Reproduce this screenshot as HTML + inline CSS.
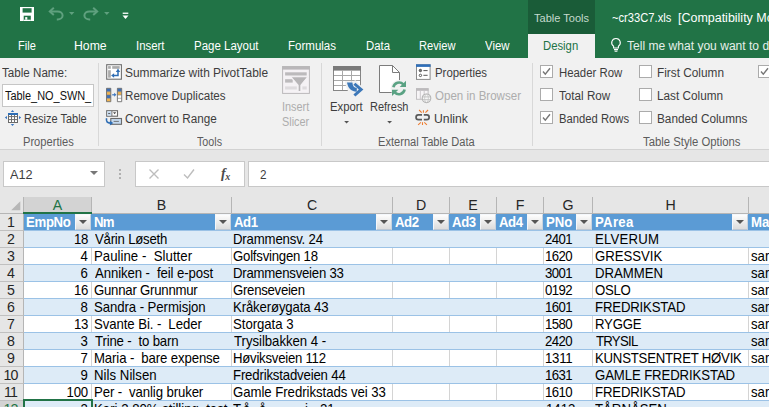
<!DOCTYPE html>
<html>
<head>
<meta charset="utf-8">
<title>Excel</title>
<style>
html,body{margin:0;padding:0;}
body{width:769px;height:407px;overflow:hidden;position:relative;background:#e6e6e6;font-family:"Liberation Sans",sans-serif;}
.abs{position:absolute;}
.t{position:absolute;white-space:nowrap;line-height:14px;height:14px;transform-origin:0 50%;}
#title{left:0;top:0;width:769px;height:58px;background:#217346;}
#ttools{left:528px;top:0;width:67px;height:34px;background:#1a5c38;}
#design{left:528px;top:34px;width:67px;height:24px;background:#f1f1f1;}
.tab{color:#fff;font-size:12px;}
#ribbon{left:0;top:58px;width:769px;height:91px;background:#f1f1f1;}
#ribline{left:0;top:149px;width:769px;height:1px;background:#d2d2d2;}
.rt{color:#3d3d3d;font-size:12px;}
.gl{color:#5c5c5c;font-size:12px;}
.dis{color:#adadad;font-size:12px;}
.sep{position:absolute;top:63px;width:1px;height:83px;background:#d8d8d8;}
.cb{position:absolute;width:11px;height:11px;border:1px solid #ababab;background:#fff;}
.box{position:absolute;background:#fff;border:1px solid #c8c8c8;box-sizing:border-box;}
#grid{left:0;top:197px;width:769px;height:210px;background:#fff;}
.ch{position:absolute;top:197px;height:17px;background:#e6e6e6;border-right:1px solid #b5b5b5;border-bottom:1px solid #b5b5b5;box-sizing:border-box;font-size:14.2px;color:#262626;text-align:center;line-height:17px;}
.rh{position:absolute;left:0;width:24px;height:17px;background:#e6e6e6;border-right:1px solid #b5b5b5;border-bottom:1px solid #c0c0c0;box-sizing:border-box;font-size:14.2px;letter-spacing:-0.8px;color:#262626;text-align:center;line-height:17px;padding-right:2px;}
.row{position:absolute;left:24px;width:745px;height:17px;box-sizing:border-box;border-bottom:1px solid #9bc2e6;}
.band{background:#ddebf7;}
.hdr{background:#5b9bd5;}
.c{position:absolute;font-size:14.2px;color:#000;white-space:nowrap;line-height:17px;height:17px;top:0;transform:scaleX(0.93);transform-origin:0 50%;}
.cr{transform-origin:100% 50%;}
.hc{position:absolute;font-size:14.2px;color:#fff;font-weight:bold;white-space:nowrap;line-height:17px;height:17px;top:0;transform:scaleX(0.93);transform-origin:0 50%;}
.vl{position:absolute;top:0;width:1px;height:16px;background:#d4d4d4;}
.dd{position:absolute;top:0px;width:16px;height:16px;background:linear-gradient(#fdfdfd,#dcdcdc);border:1px solid;border-color:#f4f7fb #c9d3de #bcc6d2 #f4f7fb;box-sizing:border-box;}
.dd:after{content:"";position:absolute;left:3px;top:5px;border-left:4px solid transparent;border-right:4px solid transparent;border-top:4.5px solid #555;}
</style>
</head>
<body>
<div class="abs" id="title"></div>
<div class="abs" id="ttools"></div>
<div class="abs" id="design"></div>
<div class="abs" id="ribbon"></div>
<div class="abs" id="ribline"></div>
<div class="sep" style="left:98.0px"></div>
<div class="sep" style="left:321.0px"></div>
<div class="sep" style="left:532.0px"></div>
<div class="box" style="left:2px;top:84px;width:92px;height:23px;border-color:#c6c6c6;"></div>
<div class="cb" style="left:540px;top:65px"></div>
<svg class="abs" style="left:540px;top:65px" width="13" height="13" viewBox="0 0 13 13"><path d="M3 6.5 L5.3 9.2 L10 3.2" fill="none" stroke="#777" stroke-width="1.4"/></svg>
<div class="cb" style="left:540px;top:88px"></div>
<div class="cb" style="left:540px;top:111px"></div>
<svg class="abs" style="left:540px;top:111px" width="13" height="13" viewBox="0 0 13 13"><path d="M3 6.5 L5.3 9.2 L10 3.2" fill="none" stroke="#777" stroke-width="1.4"/></svg>
<div class="cb" style="left:639px;top:65px"></div>
<div class="cb" style="left:639px;top:88px"></div>
<div class="cb" style="left:639px;top:111px"></div>
<div class="cb" style="left:758px;top:65px"></div>
<svg class="abs" style="left:758px;top:65px" width="13" height="13" viewBox="0 0 13 13"><path d="M3 6.5 L5.3 9.2 L10 3.2" fill="none" stroke="#777" stroke-width="1.4"/></svg>
<div class="box" style="left:3px;top:161px;width:102px;height:26px"></div>
<div class="box" style="left:135px;top:161px;width:110px;height:26px"></div>
<div class="box" style="left:248px;top:161px;width:530px;height:26px"></div>
<div class="abs" style="left:90px;top:171px;border-left:4px solid transparent;border-right:4px solid transparent;border-top:4px solid #777"></div>
<div class="abs" style="left:119px;top:169px;width:1.5px;height:2px;background:#b0b0b0"></div>
<div class="abs" style="left:119px;top:173px;width:1.5px;height:2px;background:#b0b0b0"></div>
<div class="abs" style="left:119px;top:177px;width:1.5px;height:2px;background:#b0b0b0"></div>
<svg class="abs" style="left:147px;top:167px" width="14" height="14" viewBox="0 0 14 14"><path d="M2.5 2.5 L11.5 11.5 M11.5 2.5 L2.5 11.5" stroke="#bdbdbd" stroke-width="1.4" fill="none"/></svg>
<svg class="abs" style="left:182px;top:167px" width="14" height="14" viewBox="0 0 14 14"><path d="M2 7.5 L5.5 11 L12 2.5" stroke="#bdbdbd" stroke-width="1.4" fill="none"/></svg>
<span class="abs" style="left:221px;top:166px;font-family:'Liberation Serif',serif;font-style:italic;font-weight:bold;font-size:14px;color:#4a4a4a;line-height:16px;letter-spacing:0px">f<span style="font-size:10px;position:relative;top:1.5px;left:-0.5px">x</span></span>
<div class="abs" id="grid"></div>
<div class="ch" style="left:0;width:24px"></div>
<svg class="abs" style="left:10px;top:200px" width="12" height="12" viewBox="0 0 12 12"><path d="M10.3 1.2 L10.3 10.3 L1.2 10.3 Z" fill="#b7b7b7"/></svg>
<div class="ch" style="left:24px;width:68px;background:#d3d3d3;color:#217346;border-bottom:2px solid #217346;">A</div>
<div class="ch" style="left:92px;width:140px;">B</div>
<div class="ch" style="left:232px;width:161px;">C</div>
<div class="ch" style="left:393px;width:57px;">D</div>
<div class="ch" style="left:450px;width:47px;">E</div>
<div class="ch" style="left:497px;width:47px;">F</div>
<div class="ch" style="left:544px;width:49px;">G</div>
<div class="ch" style="left:593px;width:156px;">H</div>
<div class="ch" style="left:749px;width:51px;">I</div>
<div class="rh" style="top:214px">1</div>
<div class="row hdr" style="top:214px;">
<span class="hc" style="left:1.6px;top:0px;letter-spacing:-0.35px">EmpNo</span>
<div class="dd" style="left:51px;top:0;height:16px"></div>
<span class="hc" style="left:69.6px;top:0px;letter-spacing:-0.80px">Nm</span>
<div class="dd" style="left:191px;top:0;height:16px"></div>
<span class="hc" style="left:209.6px;top:0px;letter-spacing:-0.50px">Ad1</span>
<div class="dd" style="left:352px;top:0;height:16px"></div>
<span class="hc" style="left:370.6px;top:0px;letter-spacing:-0.50px">Ad2</span>
<div class="dd" style="left:409px;top:0;height:16px"></div>
<span class="hc" style="left:427.6px;top:0px;letter-spacing:-0.40px">Ad3</span>
<div class="dd" style="left:456px;top:0;height:16px"></div>
<span class="hc" style="left:474.6px;top:0px;letter-spacing:-0.50px">Ad4</span>
<div class="dd" style="left:503px;top:0;height:16px"></div>
<span class="hc" style="left:521.6px;top:0px;letter-spacing:-0.10px">PNo</span>
<div class="dd" style="left:552px;top:0;height:16px"></div>
<span class="hc" style="left:570.6px;top:0px;letter-spacing:0.30px">PArea</span>
<div class="dd" style="left:708px;top:0;height:16px"></div>
<span class="hc" style="left:726.6px;top:0px;letter-spacing:0.00px">Ma</span>
</div>
<div class="rh" style="top:231px;">2</div>
<div class="row band" style="top:231px">
<span class="c cr" style="right:681px;letter-spacing:-0.3px">18</span>
<span class="c" style="left:70.80px;letter-spacing:-0.236px;white-space:pre">Vårin Løseth</span>
<span class="c" style="left:209.10px;letter-spacing:-0.183px;white-space:pre">Drammensv. 24</span>
<span class="c" style="left:521.20px;letter-spacing:-0.599px;white-space:pre">2401</span>
<span class="c" style="left:570.90px;letter-spacing:0.232px;white-space:pre">ELVERUM</span>
</div>
<div class="rh" style="top:248px;">3</div>
<div class="row" style="top:248px">
<div class="vl" style="left:67px"></div>
<div class="vl" style="left:207px"></div>
<div class="vl" style="left:368px"></div>
<div class="vl" style="left:425px"></div>
<div class="vl" style="left:472px"></div>
<div class="vl" style="left:519px"></div>
<div class="vl" style="left:568px"></div>
<div class="vl" style="left:724px"></div>
<span class="c cr" style="right:681px;letter-spacing:-0.3px">4</span>
<span class="c" style="left:69.80px;letter-spacing:0.033px;white-space:pre">Pauline -  Slutter</span>
<span class="c" style="left:209.10px;letter-spacing:-0.247px;white-space:pre">Golfsvingen 18</span>
<span class="c" style="left:521.20px;letter-spacing:-0.599px;white-space:pre">1620</span>
<span class="c" style="left:570.90px;letter-spacing:-0.031px;white-space:pre">GRESSVIK</span>
<span class="c" style="left:727px">sar</span>
</div>
<div class="rh" style="top:265px;">4</div>
<div class="row band" style="top:265px">
<span class="c cr" style="right:681px;letter-spacing:-0.3px">6</span>
<span class="c" style="left:70.80px;letter-spacing:-0.107px;white-space:pre">Anniken -  feil e-post</span>
<span class="c" style="left:209.10px;letter-spacing:-0.254px;white-space:pre">Drammensveien 33</span>
<span class="c" style="left:521.20px;letter-spacing:-0.599px;white-space:pre">3001</span>
<span class="c" style="left:570.90px;letter-spacing:-0.032px;white-space:pre">DRAMMEN</span>
<span class="c" style="left:727px">sar</span>
</div>
<div class="rh" style="top:282px;">5</div>
<div class="row" style="top:282px">
<div class="vl" style="left:67px"></div>
<div class="vl" style="left:207px"></div>
<div class="vl" style="left:368px"></div>
<div class="vl" style="left:425px"></div>
<div class="vl" style="left:472px"></div>
<div class="vl" style="left:519px"></div>
<div class="vl" style="left:568px"></div>
<div class="vl" style="left:724px"></div>
<span class="c cr" style="right:681px;letter-spacing:-0.3px">16</span>
<span class="c" style="left:69.80px;letter-spacing:-0.256px;white-space:pre">Gunnar Grunnmur</span>
<span class="c" style="left:209.10px;letter-spacing:-0.300px;white-space:pre">Grenseveien</span>
<span class="c" style="left:521.20px;letter-spacing:-0.599px;white-space:pre">0192</span>
<span class="c" style="left:570.90px;letter-spacing:-0.334px;white-space:pre">OSLO</span>
<span class="c" style="left:727px">sar</span>
</div>
<div class="rh" style="top:299px;">6</div>
<div class="row band" style="top:299px">
<span class="c cr" style="right:681px;letter-spacing:-0.3px">8</span>
<span class="c" style="left:69.80px;letter-spacing:-0.082px;white-space:pre">Sandra - Permisjon</span>
<span class="c" style="left:209.10px;letter-spacing:-0.158px;white-space:pre">Kråkerøygata 43</span>
<span class="c" style="left:521.20px;letter-spacing:-0.599px;white-space:pre">1601</span>
<span class="c" style="left:570.90px;letter-spacing:-0.180px;white-space:pre">FREDRIKSTAD</span>
<span class="c" style="left:727px">sar</span>
</div>
<div class="rh" style="top:316px;">7</div>
<div class="row" style="top:316px">
<div class="vl" style="left:67px"></div>
<div class="vl" style="left:207px"></div>
<div class="vl" style="left:368px"></div>
<div class="vl" style="left:425px"></div>
<div class="vl" style="left:472px"></div>
<div class="vl" style="left:519px"></div>
<div class="vl" style="left:568px"></div>
<div class="vl" style="left:724px"></div>
<span class="c cr" style="right:681px;letter-spacing:-0.3px">13</span>
<span class="c" style="left:69.80px;letter-spacing:-0.089px;white-space:pre">Svante Bi. -  Leder</span>
<span class="c" style="left:209.10px;letter-spacing:-0.045px;white-space:pre">Storgata 3</span>
<span class="c" style="left:521.20px;letter-spacing:-0.599px;white-space:pre">1580</span>
<span class="c" style="left:570.90px;letter-spacing:-0.250px;white-space:pre">RYGGE</span>
<span class="c" style="left:727px">sar</span>
</div>
<div class="rh" style="top:333px;">8</div>
<div class="row band" style="top:333px">
<span class="c cr" style="right:681px;letter-spacing:-0.3px">3</span>
<span class="c" style="left:70.80px;letter-spacing:-0.175px;white-space:pre">Trine -  to barn</span>
<span class="c" style="left:210.10px;letter-spacing:-0.042px;white-space:pre">Trysilbakken 4 -</span>
<span class="c" style="left:521.20px;letter-spacing:-0.599px;white-space:pre">2420</span>
<span class="c" style="left:571.90px;letter-spacing:-0.800px;white-space:pre">TRYSIL</span>
<span class="c" style="left:727px">sar</span>
</div>
<div class="rh" style="top:350px;">9</div>
<div class="row" style="top:350px">
<div class="vl" style="left:67px"></div>
<div class="vl" style="left:207px"></div>
<div class="vl" style="left:368px"></div>
<div class="vl" style="left:425px"></div>
<div class="vl" style="left:472px"></div>
<div class="vl" style="left:519px"></div>
<div class="vl" style="left:568px"></div>
<div class="vl" style="left:724px"></div>
<span class="c cr" style="right:681px;letter-spacing:-0.3px">7</span>
<span class="c" style="left:69.80px;letter-spacing:-0.130px;white-space:pre">Maria -  bare expense</span>
<span class="c" style="left:209.10px;letter-spacing:-0.272px;white-space:pre">Høviksveien 112</span>
<span class="c" style="left:521.20px;letter-spacing:-0.266px;white-space:pre">1311</span>
<span class="c" style="left:570.90px;letter-spacing:-0.246px;white-space:pre">KUNSTSENTRET HØVIK</span>
<span class="c" style="left:727px">sar</span>
</div>
<div class="rh" style="top:367px;">10</div>
<div class="row band" style="top:367px">
<span class="c cr" style="right:681px;letter-spacing:-0.3px">9</span>
<span class="c" style="left:69.80px;letter-spacing:0.040px;white-space:pre">Nils Nilsen</span>
<span class="c" style="left:209.10px;letter-spacing:-0.187px;white-space:pre">Fredrikstadveien 44</span>
<span class="c" style="left:521.20px;letter-spacing:-0.599px;white-space:pre">1631</span>
<span class="c" style="left:570.90px;letter-spacing:-0.125px;white-space:pre">GAMLE FREDRIKSTAD</span>
</div>
<div class="rh" style="top:384px;">11</div>
<div class="row" style="top:384px">
<div class="vl" style="left:67px"></div>
<div class="vl" style="left:207px"></div>
<div class="vl" style="left:368px"></div>
<div class="vl" style="left:425px"></div>
<div class="vl" style="left:472px"></div>
<div class="vl" style="left:519px"></div>
<div class="vl" style="left:568px"></div>
<div class="vl" style="left:724px"></div>
<span class="c cr" style="right:681px;letter-spacing:-0.3px">100</span>
<span class="c" style="left:69.80px;letter-spacing:-0.125px;white-space:pre">Per -  vanlig bruker</span>
<span class="c" style="left:209.10px;letter-spacing:-0.049px;white-space:pre">Gamle Fredrikstads vei 33</span>
<span class="c" style="left:521.20px;letter-spacing:-0.599px;white-space:pre">1610</span>
<span class="c" style="left:570.90px;letter-spacing:-0.180px;white-space:pre">FREDRIKSTAD</span>
<span class="c" style="left:727px">sar</span>
</div>
<div class="rh" style="top:401px;background:#d3d3d3;color:#217346;">12</div>
<div class="row band" style="top:401px">
<span class="c cr" style="right:681px;letter-spacing:-0.3px">2</span>
<span class="c" style="left:69.60px;letter-spacing:0.000px;white-space:pre">Kari 2 80% stilling  test</span>
<span class="c" style="left:209.50px;letter-spacing:0.000px;white-space:pre"></span>
<span class="c" style="left:521.80px;letter-spacing:0.000px;white-space:pre">1413</span>
<span class="c" style="left:570.90px;letter-spacing:0.000px;white-space:pre">TÅRNÅSEN</span>
</div>
<span class="c" style="left:233.0px;top:401px">T</span>
<span class="c" style="left:243.2px;top:401px">å</span>
<span class="c" style="left:258.7px;top:401px">å</span>
<span class="c" style="left:305.3px;top:401px">i</span>
<span class="c" style="left:319.6px;top:401px">21</span>
<div class="abs" style="left:23px;top:212px;width:69px;height:2px;background:#217346"></div>
<div class="abs" style="left:23px;top:399px;width:70px;height:20px;border:2px solid #217346;box-sizing:border-box"></div>
<!-- QAT icons -->
<svg class="abs" style="left:19px;top:6px" width="16" height="16" viewBox="0 0 16 16">
  <path d="M1 1 H15 V15 H1 Z" fill="#fff"/>
  <rect x="3.6" y="2.2" width="9" height="4.4" fill="#217346"/>
  <rect x="4.7" y="9.7" width="7.1" height="5.3" fill="#217346"/>
  <rect x="6.2" y="11.1" width="2.1" height="2.6" fill="#fff"/>
  <rect x="4.7" y="13.7" width="7.1" height="1.3" fill="#fff"/>
</svg>
<svg class="abs" style="left:47px;top:6px" width="30" height="16" viewBox="0 0 30 16">
  <path d="M3.2 5.4 H10.6 A5 4 0 0 1 10.6 13.4 H9.8" fill="none" stroke="#5fa07e" stroke-width="2"/>
  <path d="M6.8 1.8 L2.8 5.4 L6.8 9" fill="none" stroke="#5fa07e" stroke-width="2"/>
  <path d="M22 6 H27.4 L24.7 9.1 Z" fill="#5fa07e"/>
</svg>
<svg class="abs" style="left:82px;top:6px" width="30" height="16" viewBox="0 0 30 16">
  <path d="M14.8 5.4 H7.4 A5 4 0 0 0 7.4 13.4 H8.2" fill="none" stroke="#5fa07e" stroke-width="2"/>
  <path d="M11.2 1.8 L15.2 5.4 L11.2 9" fill="none" stroke="#5fa07e" stroke-width="2"/>
  <path d="M22.1 6 H27.5 L24.8 9.1 Z" fill="#5fa07e"/>
</svg>
<svg class="abs" style="left:121px;top:11px" width="10" height="10" viewBox="0 0 10 10">
  <rect x="1.7" y="1.6" width="5.6" height="1.3" fill="#fff"/>
  <path d="M1.5 4.6 H7.5 L4.5 8 Z" fill="#fff"/>
</svg>
<!-- lightbulb -->
<svg class="abs" style="left:609px;top:37px" width="14" height="16" viewBox="0 0 14 16">
  <path d="M7 1.5 A4.2 4.2 0 0 0 4.6 9.2 V11 H9.4 V9.2 A4.2 4.2 0 0 0 7 1.5 Z" fill="none" stroke="#fff" stroke-width="1.1"/>
  <path d="M5 12.6 H9 M5.6 14.2 H8.4" stroke="#fff" stroke-width="1.1"/>
</svg>
<!-- resize table -->
<svg class="abs" style="left:4px;top:110px" width="18" height="17" viewBox="0 0 18 17">
  <rect x="4.5" y="3.5" width="9" height="9" fill="#fff" stroke="#6a6a6a" stroke-width="1"/>
  <path d="M4.5 6.6 H13.5 M4.5 9.6 H13.5 M7.5 5 V12.5 M10.5 5 V12.5" stroke="#707070" stroke-width="1"/>
  <rect x="4" y="3" width="10" height="2" fill="#2e6eb5"/>
  <path d="M8.5 0 L10.2 1.9 H6.8 Z M8.5 16 L10.2 14.1 H6.8 Z M0.8 7.6 L3 6 V9.2 Z M17.2 7.6 L15 6 V9.2 Z" fill="#3a77c2"/>
</svg>
<!-- pivot -->
<svg class="abs" style="left:105px;top:63px" width="18" height="18" viewBox="0 0 18 18">
  <rect x="1.7" y="1.7" width="14.7" height="14.5" fill="#fff" stroke="#707070" stroke-width="1.1"/>
  <rect x="3.1" y="3.1" width="2.7" height="2.7" fill="#ababab"/>
  <rect x="7.2" y="3.1" width="7.5" height="2.7" fill="#ababab"/>
  <rect x="3.1" y="7.2" width="2.7" height="7.5" fill="#ababab"/>
  <path d="M8 12.5 H13 V8.2" fill="none" stroke="#2e6db4" stroke-width="1.5"/>
  <path d="M10.8 8.9 L13 5.6 L15.2 8.9 Z M9.1 10.2 L6.1 12.5 L9.1 14.8 Z" fill="#2e6db4"/>
</svg>
<!-- remove duplicates -->
<svg class="abs" style="left:105px;top:87px" width="18" height="16" viewBox="0 0 18 16">
  <rect x="1.5" y="1.3" width="4.3" height="3.4" fill="#3e6fb6"/>
  <rect x="1.5" y="4.7" width="4.3" height="3.3" fill="#f0b452"/>
  <rect x="1.5" y="8" width="4.3" height="3.3" fill="#3e6fb6"/>
  <rect x="1.5" y="11.3" width="4.3" height="3.4" fill="#f0b452"/>
  <rect x="12.4" y="1.3" width="4.3" height="3.4" fill="#3e6fb6"/>
  <rect x="12.4" y="4.7" width="4.3" height="3.3" fill="#f0b452"/>
  <rect x="12.4" y="8" width="4.3" height="6.7" fill="#fff"/>
  <path d="M1.5 1.3 H5.8 V14.7 H1.5 Z M12.4 1.3 H16.7 V14.7 H12.4 Z" fill="none" stroke="#6e6e6e" stroke-width="0.9"/>
  <path d="M1.5 4.7 H5.8 M1.5 8 H5.8 M1.5 11.3 H5.8 M12.4 4.7 H16.7 M12.4 8 H16.7 M12.4 11.3 H16.7" fill="none" stroke="#7a7a7a" stroke-width="0.6"/>
  <path d="M7.2 7.8 H9.8" stroke="#3874bf" stroke-width="1.2"/>
  <path d="M9.2 5.8 L11.4 7.8 L9.2 9.8 Z" fill="#3874bf"/>
</svg>
<!-- convert to range -->
<svg class="abs" style="left:105px;top:109px" width="18" height="18" viewBox="0 0 18 18">
  <rect x="1.7" y="1.7" width="10.8" height="5.5" fill="#fff" stroke="#6a6a6a" stroke-width="1.1"/>
  <rect x="2.3" y="2.3" width="4.2" height="4.3" fill="#c5daf0"/>
  <path d="M6.9 2 V7" stroke="#6a6a6a" stroke-width="0.9"/>
  <path d="M3.2 4.5 H5.2" stroke="#555" stroke-width="0.9"/>
  <path d="M8 3.2 H11.2 L9.6 5.3 Z" fill="#4a4a4a"/>
  <rect x="5.8" y="9.5" width="10.7" height="5.8" fill="#c5daf0" stroke="#6a6a6a" stroke-width="1.1"/>
  <path d="M8.6 12.4 H13.9" stroke="#6a6a6a" stroke-width="0.9"/>
  <path d="M1.6 9.3 C0.8 12.6 2.4 14 5.4 14.1" fill="none" stroke="#2e6db4" stroke-width="1.6"/>
  <path d="M4.9 11.8 L8.2 14.1 L4.9 16.6 Z" fill="#2e6db4"/>
</svg>
<!-- insert slicer -->
<svg class="abs" style="left:281px;top:65px" width="30" height="30" viewBox="0 0 30 30">
  <rect x="1.6" y="1.6" width="26.8" height="26.8" fill="#f5f2f5" stroke="#bbb9bb" stroke-width="1"/>
  <rect x="1.1" y="1.1" width="27.8" height="3.5" fill="#b9b7b9"/>
  <rect x="4.1" y="7.3" width="21.6" height="3.2" fill="#bcbabc"/>
  <rect x="4.1" y="14.2" width="7.6" height="3.4" fill="#bcbabc"/>
  <rect x="4.1" y="21.4" width="11.7" height="3.1" fill="#dedbde"/>
  <rect x="21.4" y="21.4" width="4.3" height="3.1" fill="#dedbde"/>
  <path d="M9.8 11.8 H26.8 L19.9 20.2 V26.6 H17.1 V20.2 Z" fill="#b7b5b7" stroke="#f5f2f5" stroke-width="1.1"/>
</svg>
<!-- export -->
<svg class="abs" style="left:332px;top:65px" width="33" height="33" viewBox="0 0 33 33">
  <rect x="1.5" y="1.5" width="27" height="24" fill="#fff" stroke="#858585" stroke-width="1"/>
  <rect x="1" y="1" width="28" height="4.6" fill="#7a7a7a"/>
  <path d="M2 10.5 H28 M2 15.5 H28 M2 20.5 H28 M10.5 5.6 V25 M19.5 5.6 V25" stroke="#a8a8a8" stroke-width="1"/>
  <path d="M13 16.2 H21.8 L23.2 15 L33 24.6 L23.2 33 L19.4 29.4 C15.8 27 13.9 23 13 16.2 Z" fill="#f1f1f1"/>
  <path d="M15 17.6 H20.4 C20.6 21.2 22 22.8 24.8 23 V26.8 C19.4 26.6 16 23.6 15 17.6 Z" fill="#3d78b9"/>
  <path d="M23.4 17.8 L31.4 24.6 L23.4 31.4 L21.4 29.4 L26.8 24.6 L21.4 19.8 Z" fill="#3d78b9"/>
</svg>
<!-- refresh -->
<svg class="abs" style="left:378px;top:64px" width="32" height="34" viewBox="0 0 32 34">
  <path d="M1.5 1.5 H14.5 L21.5 8.5 V28.5 H1.5 Z" fill="#fff" stroke="#7c7c7c" stroke-width="1"/>
  <path d="M14.5 1.5 V8.5 H21.5" fill="none" stroke="#7c7c7c" stroke-width="1"/>
  <circle cx="21" cy="24.4" r="8.4" fill="#f1f1f1"/>
  <path d="M15.4 23.3 A5.8 5.8 0 0 1 25.3 20.4" fill="none" stroke="#5aa283" stroke-width="2.6"/>
  <path d="M28 16.8 V23.1 H21.7 Z" fill="#5aa283"/>
  <path d="M26.6 25.5 A5.8 5.8 0 0 1 16.7 28.4" fill="none" stroke="#5aa283" stroke-width="2.6"/>
  <path d="M14 32 V25.7 H20.3 Z" fill="#5aa283"/>
</svg>
<!-- dropdown arrows big buttons -->
<svg class="abs" style="left:343px;top:120px" width="8" height="5" viewBox="0 0 8 5"><path d="M1.2 1 H6 L3.6 3.6 Z" fill="#555"/></svg>
<svg class="abs" style="left:386px;top:120px" width="8" height="5" viewBox="0 0 8 5"><path d="M1.2 1 H6 L3.6 3.6 Z" fill="#555"/></svg>
<!-- properties -->
<svg class="abs" style="left:415px;top:63px" width="17" height="18" viewBox="0 0 17 18">
  <rect x="1.5" y="1.8" width="13.6" height="14.6" fill="#fff" stroke="#8a8a8a" stroke-width="1"/>
  <rect x="1" y="1.3" width="14.6" height="2.6" fill="#2f6fba"/>
  <circle cx="5.4" cy="7.5" r="1.2" fill="#777" stroke="#555" stroke-width="1"/>
  <circle cx="5.4" cy="12.4" r="1.2" fill="#fff" stroke="#555" stroke-width="1"/>
  <path d="M8.4 7.6 H12.6 M8.4 12.3 H12.6" stroke="#555" stroke-width="1"/>
</svg>
<!-- open in browser (disabled) -->
<svg class="abs" style="left:415px;top:87px" width="18" height="18" viewBox="0 0 18 18">
  <rect x="1.5" y="1.7" width="11.6" height="10.6" fill="#f7f5f7" stroke="#c2c0c2" stroke-width="1"/>
  <rect x="1" y="1.2" width="12.6" height="2.6" fill="#bcbabc"/>
  <path d="M5.3 3.8 V12.3 M9.2 3.8 V12.3" stroke="#cbc9cb" stroke-width="1"/>
  <circle cx="11.5" cy="11.3" r="4.3" fill="#f6f6f6" stroke="#b2b2b2" stroke-width="1.1"/>
  <path d="M7.6 9.9 H15.4 M7.6 12.7 H15.4" stroke="#bdbdbd" stroke-width="0.9"/>
  <ellipse cx="11.5" cy="11.3" rx="1.9" ry="4.2" fill="none" stroke="#c4c4c4" stroke-width="0.8"/>
</svg>
<!-- unlink -->
<svg class="abs" style="left:414px;top:109px" width="18" height="18" viewBox="0 0 18 18">
  <path d="M8 5.95 H4.4 A2.35 2.35 0 0 0 4.4 10.65 H8" fill="none" stroke="#5a5a5a" stroke-width="1.7"/>
  <path d="M9.8 5.95 H12.8 A2.35 2.35 0 0 1 12.8 10.65 H9.8" fill="none" stroke="#5a5a5a" stroke-width="1.7"/>
  <path d="M9.4 1.2 V3.7 M5.1 1 L7.7 3.7 M14.1 1 L11.4 3.7 M8.5 13.2 V16 M6.9 13.3 L4.1 15.8 M10.3 13.3 L12.9 15.8" stroke="#ee7d31" stroke-width="1.1"/>
</svg>

<span class="t tab" style="left:18.2px;top:39.0px;transform:scaleX(0.920);">File</span>
<span class="t tab" style="left:74.3px;top:39.0px;transform:scaleX(1.021);">Home</span>
<span class="t tab" style="left:136.0px;top:39.0px;transform:scaleX(0.950);">Insert</span>
<span class="t tab" style="left:194.0px;top:39.0px;transform:scaleX(0.957);">Page Layout</span>
<span class="t tab" style="left:288.0px;top:39.0px;transform:scaleX(0.960);">Formulas</span>
<span class="t tab" style="left:366.0px;top:39.0px;transform:scaleX(0.946);">Data</span>
<span class="t tab" style="left:419.0px;top:39.0px;transform:scaleX(0.927);">Review</span>
<span class="t tab" style="left:485.0px;top:39.0px;transform:scaleX(0.950);">View</span>
<span class="t tab" style="left:542.8px;top:39.0px;transform:scaleX(0.942);color:#217346;">Design</span>
<span class="t tab" style="left:627.2px;top:39.0px;transform:scaleX(0.940);color:#e6f0ea;transform:scaleX(1.005);">Tell me what you want to do</span>
<span class="t tab" style="left:534.0px;top:11.0px;transform:scaleX(0.959);color:#c5dacd;font-size:11.5px;">Table Tools</span>
<span class="t tab" style="left:611.5px;top:11.0px;transform:scaleX(0.931);">~cr33C7.xls</span>
<span class="t tab" style="left:677.5px;top:11.0px;transform:scaleX(0.940);transform:scaleX(1.039);">[Compatibility Mode] - Excel</span>
<span class="t rt" style="left:2.2px;top:65.6px;transform:scaleX(0.968);">Table Name:</span>
<span class="t rt" style="left:5.2px;top:89.0px;transform:scaleX(0.910);color:#111;">Table_NO_SWN_</span>
<span class="t rt" style="left:24.3px;top:111.6px;transform:scaleX(0.916);">Resize Table</span>
<span class="t gl" style="left:22.7px;top:135.0px;transform:scaleX(0.927);">Properties</span>
<span class="t rt" style="left:125.0px;top:65.6px;transform:scaleX(0.993);">Summarize with PivotTable</span>
<span class="t rt" style="left:125.0px;top:89.0px;transform:scaleX(0.967);">Remove Duplicates</span>
<span class="t rt" style="left:125.0px;top:111.6px;transform:scaleX(0.976);">Convert to Range</span>
<span class="t gl" style="left:197.0px;top:135.0px;transform:scaleX(0.892);">Tools</span>
<span class="t dis" style="left:281.8px;top:100.0px;transform:scaleX(0.906);">Insert</span>
<span class="t dis" style="left:281.8px;top:115.4px;transform:scaleX(0.906);">Slicer</span>
<span class="t rt" style="left:330.2px;top:100.0px;transform:scaleX(0.943);">Export</span>
<span class="t rt" style="left:370.0px;top:100.0px;transform:scaleX(0.916);">Refresh</span>
<span class="t rt" style="left:434.5px;top:65.6px;transform:scaleX(0.951);">Properties</span>
<span class="t dis" style="left:434.5px;top:89.4px;transform:scaleX(0.962);">Open in Browser</span>
<span class="t rt" style="left:433.7px;top:112.0px;transform:scaleX(1.019);">Unlink</span>
<span class="t gl" style="left:377.6px;top:134.7px;transform:scaleX(0.925);">External Table Data</span>
<span class="t rt" style="left:558.5px;top:66.4px;transform:scaleX(0.947);">Header Row</span>
<span class="t rt" style="left:558.5px;top:88.8px;transform:scaleX(0.972);">Total Row</span>
<span class="t rt" style="left:558.5px;top:111.8px;transform:scaleX(0.937);">Banded Rows</span>
<span class="t rt" style="left:657.3px;top:66.4px;transform:scaleX(0.985);">First Column</span>
<span class="t rt" style="left:657.3px;top:88.8px;transform:scaleX(0.981);">Last Column</span>
<span class="t rt" style="left:657.3px;top:111.8px;transform:scaleX(0.982);">Banded Columns</span>
<span class="t gl" style="left:643.0px;top:134.8px;transform:scaleX(0.943);">Table Style Options</span>
<span class="t rt" style="left:10.4px;top:168.0px;transform:scaleX(0.977);font-size:13px;">A12</span>
<span class="t rt" style="left:260.0px;top:168.0px;transform:scaleX(0.898);font-size:13px;">2</span>
</body>
</html>
